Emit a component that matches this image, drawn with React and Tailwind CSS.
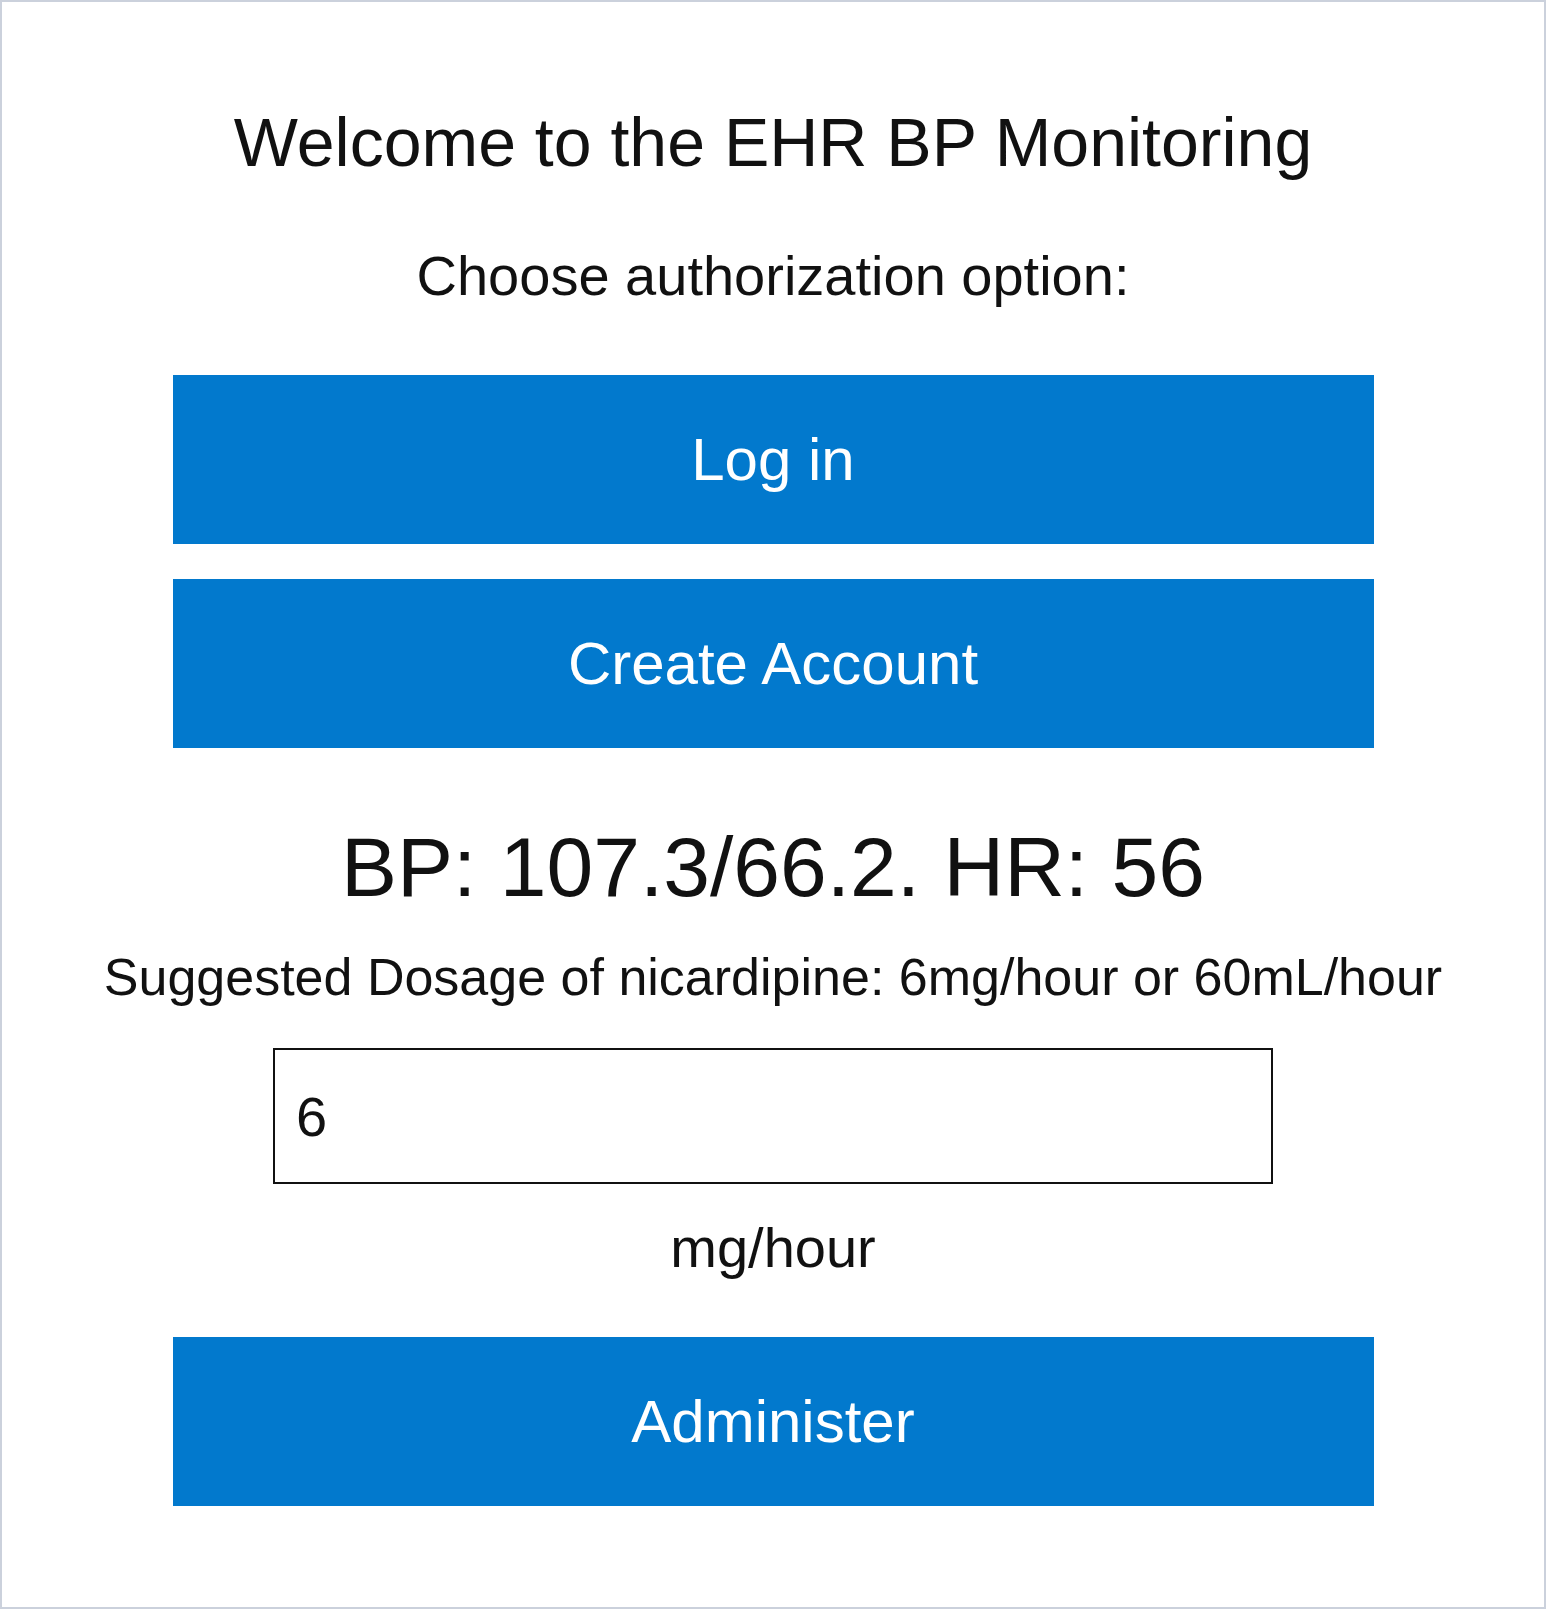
import React, { useState } from "react";

const App = () => {
  const [dose, setDose] = useState("6");

  return (
    <div className="w-[1546px] h-[1609px] border-2 border-[#cbd1dc] bg-white flex flex-col items-center pt-[106px] font-['Liberation_Sans',Arial,sans-serif] text-[#111111]">
      <h1 className="text-[68px] leading-none font-normal">Welcome to the EHR BP Monitoring</h1>
      <p className="mt-[72px] text-[56px] leading-none">Choose authorization option:</p>

      <button className="mt-[71px] w-[1201px] h-[169px] bg-[#0279cd] text-white text-[60px] leading-none">
        Log in
      </button>
      <button className="mt-[35px] w-[1201px] h-[169px] bg-[#0279cd] text-white text-[60px] leading-none">
        Create Account
      </button>

      <p className="mt-[77px] text-[84px] leading-none">BP: 107.3/66.2. HR: 56</p>
      <p className="mt-[42px] text-[52px] leading-none">
        Suggested Dosage of nicardipine: 6mg/hour or 60mL/hour
      </p>

      <input
        type="text"
        value={dose}
        onChange={(e) => setDose(e.target.value)}
        className="mt-[45px] w-[1000px] h-[136px] border-2 border-[#111111] pl-[21px] text-[56px] text-[#111111] outline-none"
      />
      <p className="mt-[36px] text-[56px] leading-none">mg/hour</p>

      <button className="mt-[61px] w-[1201px] h-[169px] bg-[#0279cd] text-white text-[60px] leading-none">
        Administer
      </button>
    </div>
  );
};

export default App;
